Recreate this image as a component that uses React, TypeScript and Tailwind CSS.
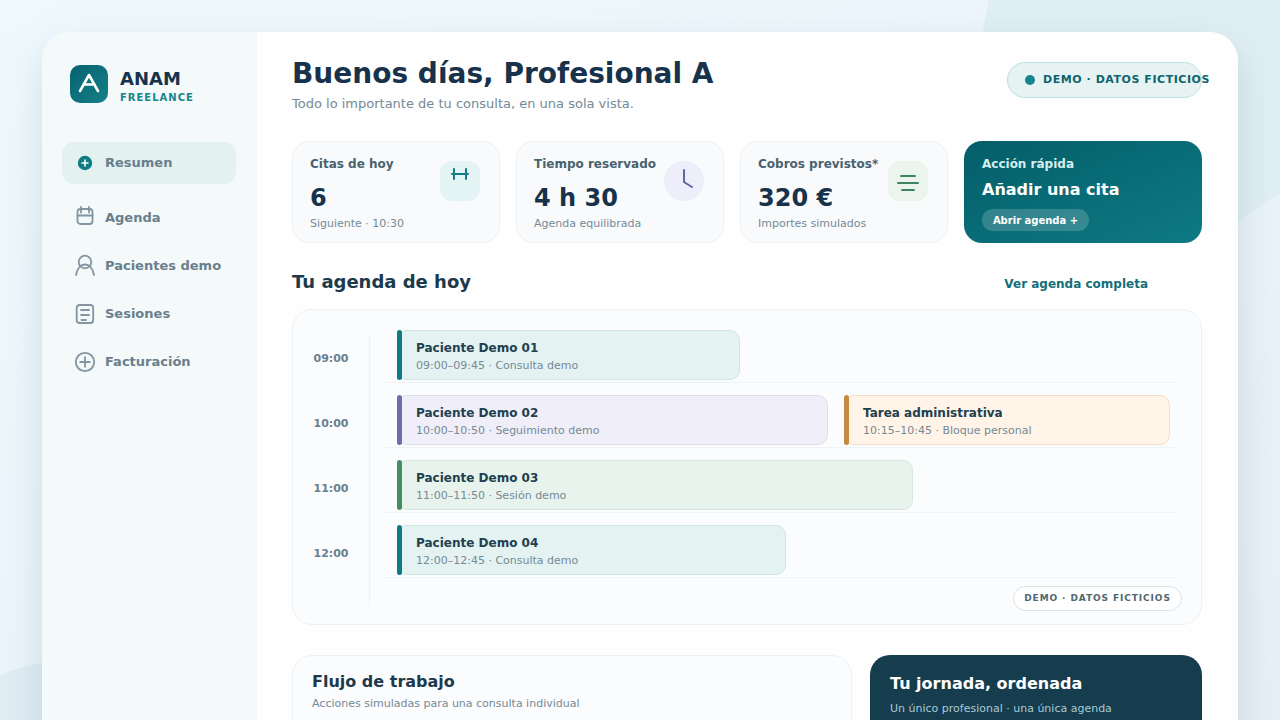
import { FC, ReactNode } from "react";
import clsx from "clsx";

interface NavItem {
  label: string;
  icon: ReactNode;
}

interface Stat {
  title: string;
  value: string;
  note: string;
  iconClass: string;
  icon: ReactNode;
}

interface Appointment {
  name: string;
  detail: string;
  span: number;
  box: string;
  bar: string;
}

// units of the day track, an appointment's span is measured against it
const TRACK = 781;

const navItems: NavItem[] = [
  {
    label: "Agenda",
    icon: (
      <>
        <rect x="4.500" y="3" width="15" height="15" rx="3" />
        <path d="M4.500 9.500h15M8 1v5.500M16 1v5.500" />
      </>
    ),
  },
  {
    label: "Pacientes demo",
    icon: (
      <>
        <circle cx="12" cy="8" r="6.300" />
        <path d="M3 21C5.500 7 18.500 7 21 21" />
      </>
    ),
  },
  {
    label: "Sesiones",
    icon: (
      <>
        <rect x="3.700" y="3" width="16.500" height="18" rx="3" />
        <path d="M8 8h8M8 13h8M8.500 18h4.500" />
      </>
    ),
  },
  {
    label: "Facturación",
    icon: (
      <>
        <circle cx="12" cy="12" r="9.200" />
        <path d="M12 7.200v9.600M7.200 12h9.600" />
      </>
    ),
  },
];

const stats: Stat[] = [
  {
    title: "Citas de hoy",
    value: "6",
    note: "Siguiente · 10:30",
    iconClass: "rounded-xl bg-[#e4f3f3] text-[#0f7b83]",
    icon: <path d="M14 8v10M26 8v10M12 13h16" />,
  },
  {
    title: "Tiempo reservado",
    value: "4 h 30",
    note: "Agenda equilibrada",
    iconClass: "rounded-full bg-[#eeeefb] text-[#5f66a6]",
    icon: <path d="M20 9v12l8 5" />,
  },
  {
    title: "Cobros previstos*",
    value: "320 €",
    note: "Importes simulados",
    iconClass: "rounded-xl bg-[#ebf5ee] text-[#3c8560]",
    icon: <path d="M13 15h14M10 22h20M14 29h12" />,
  },
];

const hours = ["09:00", "10:00", "11:00", "12:00"];

const teal = { box: "border-[#cfe5e4] bg-[#e4f2f2]", bar: "bg-[#0f7b83]" };

const agenda: Appointment[][] = [
  [{ name: "Paciente Demo 01", detail: "09:00–09:45 · Consulta demo", span: 343, ...teal }],
  [
    {
      name: "Paciente Demo 02",
      detail: "10:00–10:50 · Seguimiento demo",
      span: 431,
      box: "border-[#dfdeec] bg-[#f0eef9]",
      bar: "bg-[#6c6ea9]",
    },
    {
      name: "Tarea administrativa",
      detail: "10:15–10:45 · Bloque personal",
      span: 326,
      box: "border-[#f3dfc6] bg-[#fff4e7]",
      bar: "bg-[#c58a40]",
    },
  ],
  [
    {
      name: "Paciente Demo 03",
      detail: "11:00–11:50 · Sesión demo",
      span: 516,
      box: "border-[#d6e7dc] bg-[#e8f3ed]",
      bar: "bg-[#458e62]",
    },
  ],
  [{ name: "Paciente Demo 04", detail: "12:00–12:45 · Consulta demo", span: 389, ...teal }],
];

const Backdrop: FC = () => (
  <svg
    className="absolute inset-0 h-full w-full"
    viewBox="0 0 1280 720"
    preserveAspectRatio="none"
    aria-hidden="true"
  >
    <path d="M989 0H1280V194Q1258 206 1238 222L1000 300Q955 150 989 0Z" fill="#dfeef2" />
    <path d="M0 675Q20 667 42 663L300 620V720H0Z" fill="#dfecf4" />
  </svg>
);

const Sidebar: FC = () => (
  <aside className="w-[215px] shrink-0 bg-[#f4f9fa] pl-5 pr-[21px] pt-[33px]">
    <div className="flex items-start gap-3 pl-2">
      <svg width="38" height="38" viewBox="0 0 38 38" aria-hidden="true">
        <defs>
          <linearGradient id="logo" x1="0" y1="0" x2="1" y2="1">
            <stop offset="0" stopColor="#06636f" />
            <stop offset="1" stopColor="#147f86" />
          </linearGradient>
        </defs>
        <rect width="38" height="38" rx="10" fill="url(#logo)" />
        <path
          d="M10 26L19 10L28 26M13.500 19.500h11"
          fill="none"
          stroke="#fff"
          strokeWidth="2.600"
          strokeLinecap="round"
          strokeLinejoin="round"
        />
      </svg>
      <div className="pt-1">
        <div className="text-lg leading-5 font-bold text-[#17324a]">ANAM</div>
        <div className="mt-px text-[10px] leading-4 font-bold tracking-widest text-[#17858b]">FREELANCE</div>
      </div>
    </div>

    <nav className="mt-9 flex flex-col text-[13px] font-bold text-[#6a7f8d]">
      <a href="#resumen" className="flex h-[42px] items-center gap-2 rounded-xl bg-[#e3f2f1] pl-[11px]">
        <svg width="24" height="24" viewBox="0 0 24 24" aria-hidden="true">
          <circle cx="12" cy="12" r="7.200" fill="#0f7b83" />
          <path d="M12 9v6M9 12h6" stroke="#fff" strokeWidth="1.600" strokeLinecap="round" />
        </svg>
        Resumen
      </a>
      <div className="mt-[10px] flex flex-col">
        {navItems.map((item) => (
          <a key={item.label} href="#" className="flex h-12 items-center gap-2 pl-[11px]">
            <svg
              width="24"
              height="24"
              viewBox="0 0 24 24"
              fill="none"
              stroke="#8295a1"
              strokeWidth="1.800"
              strokeLinecap="round"
              aria-hidden="true"
            >
              {item.icon}
            </svg>
            <span className="whitespace-nowrap">{item.label}</span>
          </a>
        ))}
      </div>
    </nav>
  </aside>
);

const StatCard: FC<{ stat: Stat }> = ({ stat }) => (
  <article className="relative rounded-[18px] border border-[#edf1f3] bg-[#f9fafc] px-[17px] pt-[14px] pb-[10px]">
    <h2 className="text-xs leading-4 font-bold whitespace-nowrap text-[#48626f]">{stat.title}</h2>
    <p className="mt-[10px] text-2xl leading-8 font-bold text-[#17324a]">{stat.value}</p>
    <p className="mt-[2px] text-[11px] leading-4 text-[#758a95]">{stat.note}</p>
    <div className={clsx("absolute top-[19px] right-[19px] size-10", stat.iconClass)}>
      <svg
        width="40"
        height="40"
        viewBox="0 0 40 40"
        fill="none"
        stroke="currentColor"
        strokeWidth="2"
        strokeLinecap="round"
        aria-hidden="true"
      >
        {stat.icon}
      </svg>
    </div>
  </article>
);

const AppointmentBox: FC<{ item: Appointment }> = ({ item }) => (
  <div className="flex h-[50px]" style={{ width: `${(item.span / TRACK) * 100}%` }}>
    <div className={clsx("z-10 -mr-[5px] w-[5px] shrink-0 rounded-sm", item.bar)} />
    <div className={clsx("min-w-0 flex-1 rounded-[10px] border pt-[9px] pl-[18px] whitespace-nowrap", item.box)}>
      <h3 className="text-xs leading-4 font-bold text-[#21404f]">{item.name}</h3>
      <p className="mt-[2px] text-[11px] leading-4 text-[#758a95]">{item.detail}</p>
    </div>
  </div>
);

const Agenda: FC = () => (
  <section>
    <div className="mt-[27px] flex items-center justify-between">
      <h2 className="text-lg leading-6 font-bold text-[#1d3a4c]">Tu agenda de hoy</h2>
      <a href="#agenda" className="mr-[54px] pt-1 text-xs leading-5 font-bold text-[#126f78]">
        Ver agenda completa
      </a>
    </div>
    <div className="mt-[15px] flex rounded-[20px] border border-[#edf1f3] bg-[#fbfcfe]">
      <ol className="mt-6 mb-[18px] flex w-[77px] shrink-0 flex-col gap-[15px] border-r border-[#edf1f3] text-center text-[11px] font-bold text-[#6a7f8d]">
        {hours.map((hour) => (
          <li key={hour} className="flex h-[50px] items-center justify-center">
            {hour}
          </li>
        ))}
      </ol>
      <div className="flex min-w-0 flex-1 flex-col pt-2 pr-[19px] pb-[13px] pl-[15px]">
        {agenda.map((row, i) => (
          <div key={hours[i]} className="mr-1 flex gap-4 border-b border-[#f0f3f5] pt-3 pb-[2px] pl-3">
            {row.map((item) => (
              <AppointmentBox key={item.name} item={item} />
            ))}
          </div>
        ))}
        <div className="mt-2 flex h-[25px] w-[169px] items-center justify-center self-end rounded-full border border-[#dae3e6] bg-white text-[9px] font-bold tracking-widest whitespace-nowrap text-[#4e6872]">
          DEMO · DATOS FICTICIOS
        </div>
      </div>
    </div>
  </section>
);

const App: FC = () => {
  return (
    <div className="relative flex h-screen flex-col overflow-hidden bg-linear-to-br from-[#eff9fd] to-[#e6eef6] font-['DejaVu_Sans',sans-serif]">
      <Backdrop />
      <div className="relative mx-[42px] mt-8 flex flex-1 rounded-t-[28px] bg-[#fefefe] shadow-[0_16px_36px_rgba(23,70,84,0.14)]">
        <div className="flex min-w-0 flex-1 overflow-hidden rounded-t-[28px]">
          <Sidebar />
          <main className="min-w-0 flex-1 pt-[25px] pr-9 pl-[35px]">
            <header className="flex items-start justify-between">
              <div>
                <h1 className="text-[28px] leading-[34px] font-bold text-[#17324a]">Buenos días, Profesional A</h1>
                <p className="mt-[3px] text-[13px] leading-5 text-[#758a95]">
                  Todo lo importante de tu consulta, en una sola vista.
                </p>
              </div>
              <div className="mt-[5px] flex h-9 w-[195px] items-center gap-2 rounded-full border border-[#bfdfdf] bg-[#e7f3f3] pl-[17px] text-[11px] font-bold tracking-wider whitespace-nowrap text-[#0c646d]">
                <span className="size-[10px] shrink-0 rounded-full bg-[#17858b]" />
                DEMO · DATOS FICTICIOS
              </div>
            </header>

            <section className="mt-[27px] grid grid-cols-[208fr_208fr_208fr_238fr] gap-4">
              {stats.map((stat) => (
                <StatCard key={stat.title} stat={stat} />
              ))}
              <article className="rounded-[18px] bg-linear-to-br from-[#045e69] to-[#0e7a83] px-[18px] pt-[15px] text-white">
                <h2 className="text-xs leading-4 font-bold text-[#d5eff0]">Acción rápida</h2>
                <p className="mt-[6px] text-base leading-6 font-bold">Añadir una cita</p>
                <button className="mt-[7px] flex h-[22px] w-[107px] items-center justify-center rounded-full bg-white/18 text-[10px] font-bold whitespace-nowrap">
                  Abrir agenda +
                </button>
              </article>
            </section>

            <Agenda />

            <section className="mt-[30px] grid grid-cols-[560fr_332fr] gap-[18px]">
              <article className="h-[220px] rounded-[20px] border border-[#edf1f3] bg-[#fbfcfe] px-[19px] pt-[14px]">
                <h2 className="text-base leading-6 font-bold text-[#1d3a4c]">Flujo de trabajo</h2>
                <p className="mt-[2px] text-[11px] leading-4 text-[#758a95]">
                  Acciones simuladas para una consulta individual
                </p>
              </article>
              <article className="h-[220px] rounded-[20px] bg-[#163d4d] px-5 pt-[17px]">
                <h2 className="text-base leading-6 font-bold text-white">Tu jornada, ordenada</h2>
                <p className="mt-[5px] text-[11px] leading-4 text-[#a9cad6]">Un único profesional · una única agenda</p>
              </article>
            </section>
          </main>
        </div>
      </div>
    </div>
  );
};

export default App;
